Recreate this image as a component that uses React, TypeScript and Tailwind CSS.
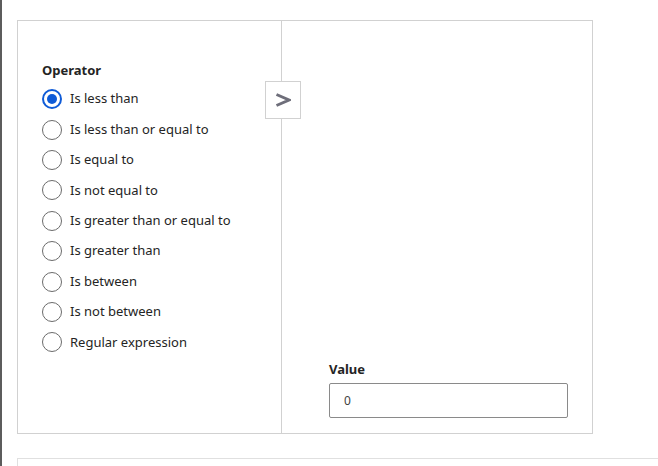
import React, { useState } from "react";

const operators = [
  "Is less than",
  "Is less than or equal to",
  "Is equal to",
  "Is not equal to",
  "Is greater than or equal to",
  "Is greater than",
  "Is between",
  "Is not between",
  "Regular expression",
];

export default function App() {
  const [selected, setSelected] = useState(0);
  const [value, setValue] = useState("0");

  return (
    <div
      className="flex h-[466px] w-[658px] overflow-hidden bg-white text-[#242424]"
      style={{ fontFamily: '"Noto Sans", "Open Sans", sans-serif' }}
    >
      <div className="w-[2px] shrink-0 bg-[#5c5c5c]" />
      <div className="flex flex-1 flex-col pl-[15px] pt-[20px]">
        <div className="relative flex h-[414px] w-[576px] shrink-0 border border-[#d1d1d1]">
          <div className="w-[264px] shrink-0 border-r border-[#d1d1d1] pl-[24px] pt-[40px]">
            <div className="mb-[5px] text-[13px] font-bold leading-[18px]">Operator</div>
            <div className="flex flex-col">
              {operators.map((op, i) => (
                <label
                  key={op}
                  className="flex h-[30.4px] cursor-pointer items-center gap-[8px] text-[13px]"
                  onClick={() => setSelected(i)}
                >
                  {selected === i ? (
                    <span className="flex h-[20px] w-[20px] items-center justify-center rounded-full border-2 border-[#0f5bd7]">
                      <span className="h-[10px] w-[10px] rounded-full bg-[#0f5bd7]" />
                    </span>
                  ) : (
                    <span className="h-[20px] w-[20px] rounded-full border border-[#6b6b6b]" />
                  )}
                  <span>{op}</span>
                </label>
              ))}
            </div>
          </div>
          <div className="flex flex-1 flex-col justify-end pb-[15px] pl-[47px]">
            <div className="mb-[5px] text-[13px] font-bold leading-[18px]">Value</div>
            <input
              value={value}
              onChange={(e) => setValue(e.target.value)}
              className="h-[35px] w-[239px] rounded-[2px] border border-[#8a8a8a] px-[14px] text-[12px] text-[#424242] outline-none"
            />
          </div>
          <button className="absolute left-[247px] top-[60px] flex h-[38px] w-[36px] items-center justify-center border border-[#d1d1d1] bg-white">
            <svg width="16" height="16" viewBox="0 0 16 16" fill="none">
              <path d="M1.5 2.5 L14 8 L1.5 13.5" stroke="#6e6e7a" strokeWidth="3" />
            </svg>
          </button>
        </div>
        <div className="mt-[24px] h-[40px] shrink-0 border-l border-t border-[#e0e0e0]" />
      </div>
    </div>
  );
}
